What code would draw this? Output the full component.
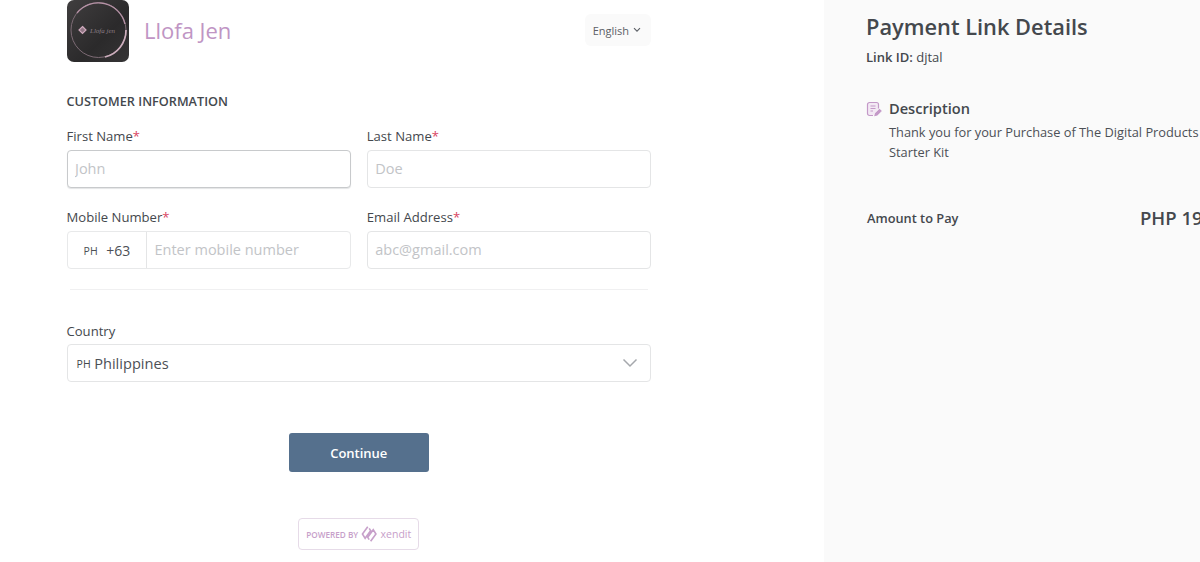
<div class="page">
  <main class="left">
    <header class="brand">
      <div class="brandname">
        <div class="logo">
          <svg width="62" height="62" viewBox="0 0 62 62">
            <defs>
              <linearGradient id="lg" x1="0" y1="0" x2="1" y2="1">
                <stop offset="0" stop-color="#403e3f" />
                <stop offset="0.6" stop-color="#2b2a2b" />
                <stop offset="1" stop-color="#353435" />
              </linearGradient>
            </defs>
            <rect width="62" height="62" rx="7" fill="url(#lg)" />
            <circle cx="31.500" cy="30" r="27.500" fill="none" stroke="#7d6b75" stroke-width="1" />
            <path d="M10 13A27.500 27.500 0 0 1 58 24" fill="none" stroke="#b692a6" stroke-width="1.300" />
            <path d="M59 30A27.500 27.500 0 0 1 38 57" fill="none" stroke="#cdaebd" stroke-width="1.700" />
            <path d="M15.500 26.500l3.500 3.500-3.500 3.500-3.500-3.500z" fill="#8f7583" stroke="#cfa9bd" stroke-width="1.200" />
            <text x="23" y="32.500" class="script">Llofa jen</text>
          </svg>
        </div>
        <span class="name">Llofa Jen</span>
      </div>
      <button class="lang">English
        <svg width="8" height="6" viewBox="0 0 8 6"><path d="M1 1.200l3 3 3-3" fill="none" stroke="#5c6066" stroke-width="1.100" /></svg>
      </button>
    </header>

    <h2 class="section">CUSTOMER INFORMATION</h2>

    <div class="grid">
      <div class="field">
        <label for="fn">First Name<em>*</em></label>
        <input id="fn" class="input focus" placeholder="John" />
      </div>
      <div class="field">
        <label for="ln">Last Name<em>*</em></label>
        <input id="ln" class="input" placeholder="Doe" />
      </div>
      <div class="field">
        <label for="mn">Mobile Number<em>*</em></label>
        <div class="phone">
          <div class="code"><span class="flag">PH</span><span>+63</span></div>
          <input id="mn" placeholder="Enter mobile number" />
        </div>
      </div>
      <div class="field">
        <label for="em">Email Address<em>*</em></label>
        <input id="em" class="input" placeholder="abc@gmail.com" />
      </div>
    </div>

    <hr />

    <div class="field">
      <label class="tight" for="co">Country</label>
      <div id="co" class="select">
        <span class="flag small">PH</span><span class="val">Philippines</span>
        <svg class="chev" width="16" height="10" viewBox="0 0 16 10"><path d="M1.500 1.500l6.500 6.500 6.500-6.500" fill="none" stroke="#a5a8ac" stroke-width="1.500" /></svg>
      </div>
    </div>

    <div class="actions"><button class="continue">Continue</button></div>

    <div class="powered">
      <div class="badge">
        <span class="pb">POWERED BY</span>
        <svg width="17" height="18" viewBox="0 0 17 18">
          <path d="M7 1.500L1.500 9l2.800 4.500L10 5.500 8.500 3.200M10 16.500L15.500 9l-2.800-4.500L7 12.500l1.500 2.300" fill="none" stroke="#c7a0ca" stroke-width="1.700" />
        </svg>
        <span class="x">xendit</span>
      </div>
    </div>
  </main>

  <aside class="right">
    <h1>Payment Link Details</h1>
    <p class="id"><b>Link ID:</b> djtal</p>
    <div class="desc">
      <svg class="dicon" width="16" height="16" viewBox="0 0 16 16" fill="none" stroke="#c499c8" stroke-width="1.200">
        <path d="M7 14.500H3.500a2 2 0 0 1-2-2v-9a2 2 0 0 1 2-2h7a2 2 0 0 1 2 2v4" fill="#f3e9f4" />
        <path d="M4.500 5h5M4.500 7.500h5M4.500 10h2.500" />
        <path d="M9 14.500l.5-2 4-4 1.500 1.500-4 4z" fill="#c499c8" />
      </svg>
      <div class="dtext">
        <h3>Description</h3>
        <p>Thank you for your Purchase of The Digital Products Starter Kit</p>
      </div>
    </div>
    <div class="amount">
      <span class="alabel">Amount to Pay</span>
      <span class="aval">PHP 199.00</span>
    </div>
  </aside>
</div>

<style>
  :global(body) {
    margin: 0;
    background: #fff;
    overflow: hidden;
  }
  .page {
    display: flex;
    width: 1200px;
    height: 562px;
    overflow: hidden;
    font-family: "Open Sans", sans-serif;
    color: #44484d;
  }
  .left {
    box-sizing: border-box;
    width: 824px;
    flex: none;
    padding: 0 173px 0 66.500px;
  }
  .brand {
    display: flex;
    justify-content: space-between;
    align-items: center;
    height: 62px;
  }
  .brandname {
    display: flex;
    align-items: center;
    gap: 15.500px;
  }
  .logo {
    width: 62px;
    height: 62px;
    line-height: 0;
  }
  .script {
    font: italic 7px "Liberation Serif", serif;
    fill: #8d7f86;
  }
  .name {
    font-size: 22px;
    line-height: 26px;
    margin-top: -3px;
    color: #c095c4;
  }
  .lang {
    display: flex;
    align-items: center;
    gap: 4px;
    height: 32px;
    margin-top: -2px;
    padding: 0 10px 0 8px;
    border: 0;
    border-radius: 6px;
    background: #fafafa;
    font: 11px "Open Sans", sans-serif;
    color: #5c6066;
  }
  .section {
    margin: 30px 0 0;
    font-size: 12.700px;
    line-height: 18px;
    font-weight: 600;
    color: #44484d;
  }
  .grid {
    display: grid;
    grid-template-columns: 284.250px 284.250px;
    column-gap: 16px;
    row-gap: 20px;
    margin-top: 17px;
  }
  .field {
    display: flex;
    flex-direction: column;
  }
  label {
    font-size: 13.100px;
    line-height: 19px;
    margin-bottom: 4px;
    color: #44484d;
  }
  label.tight {
    margin-bottom: 3px;
  }
  em {
    font-style: normal;
    color: #d9455f;
  }
  input {
    font: 14.500px "Open Sans", sans-serif;
    color: #44484d;
    outline: none;
  }
  input::placeholder {
    color: #c2c4c7;
    opacity: 1;
  }
  .input {
    box-sizing: border-box;
    width: 100%;
    height: 38px;
    padding: 0 7.500px 1px;
    border: 1px solid #e4e5e6;
    border-radius: 4px;
    background: #fff;
  }
  .input.focus {
    border-color: #c8cacc;
    box-shadow: 0 1px 1px #e4e5e6;
  }
  .phone {
    display: flex;
    box-sizing: border-box;
    height: 38px;
    border: 1px solid #e8e9ea;
    border-radius: 4px;
  }
  .code {
    display: flex;
    align-items: center;
    box-sizing: border-box;
    width: 79.500px;
    padding-left: 16px;
    gap: 8px;
    font-size: 14px;
    color: #4c5056;
    border-right: 1px solid #e4e5e6;
  }
  .flag {
    font-size: 10.500px;
    letter-spacing: 0.3px;
    padding-top: 2px;
  }
  .phone input {
    flex: 1;
    min-width: 0;
    border: 0;
    padding: 0 8px 1px 7.500px;
    background: transparent;
  }
  hr {
    margin: 20px 3px 32px 3px;
    border: 0;
    border-top: 1px solid #f0f0f1;
  }
  .select {
    display: flex;
    align-items: center;
    box-sizing: border-box;
    height: 38px;
    padding: 0 12px 0 9px;
    border: 1px solid #e4e5e6;
    border-radius: 4px;
  }
  .flag.small {
    margin-right: 3px;
  }
  .val {
    font-size: 14.600px;
    color: #4c5056;
  }
  .chev {
    margin-left: auto;
  }
  .actions {
    display: flex;
    justify-content: center;
    margin-top: 51px;
  }
  .continue {
    width: 140px;
    height: 39px;
    border: 0;
    border-radius: 3px;
    background: #55708d;
    color: #fff;
    font: 600 13px "Open Sans", sans-serif;
  }
  .powered {
    display: flex;
    justify-content: center;
    margin-top: 46px;
  }
  .badge {
    display: flex;
    align-items: center;
    gap: 3px;
    box-sizing: border-box;
    width: 121px;
    height: 32px;
    padding: 0 7px;
    border: 1px solid #e6dbe8;
    border-radius: 4px;
    background: #fff;
  }
  .pb {
    font-size: 8.200px;
    font-weight: 600;
    color: #c7a0ca;
    white-space: nowrap;
  }
  .x {
    font-size: 10.500px;
    color: #c7a0ca;
  }
  .right {
    box-sizing: border-box;
    flex: none;
    width: 376px;
    padding: 12px 0 0 42px;
    background: #fafafa;
  }
  h1 {
    margin: 0;
    font-size: 21.800px;
    line-height: 30px;
    font-weight: 600;
    color: #44484d;
    white-space: nowrap;
  }
  .id {
    margin: 6px 0 0;
    font-size: 13px;
    line-height: 19px;
  }
  .id b {
    font-weight: 600;
  }
  .desc {
    display: flex;
    gap: 7px;
    margin-top: 31px;
  }
  .dicon {
    margin-top: 3px;
    flex: none;
  }
  h3 {
    margin: 0;
    font-size: 14.600px;
    line-height: 20px;
    font-weight: 600;
  }
  .dtext p {
    width: 330px;
    margin: 4px 0 0;
    font-size: 12.800px;
    line-height: 20px;
    color: #4c5056;
  }
  .amount {
    display: flex;
    align-items: center;
    width: 400px;
    margin-top: 43px;
    margin-left: 1px;
  }
  .alabel {
    width: 273px;
    font-size: 12.800px;
    font-weight: 600;
  }
  .aval {
    font-size: 18.500px;
    font-weight: 600;
    white-space: nowrap;
  }
</style>
